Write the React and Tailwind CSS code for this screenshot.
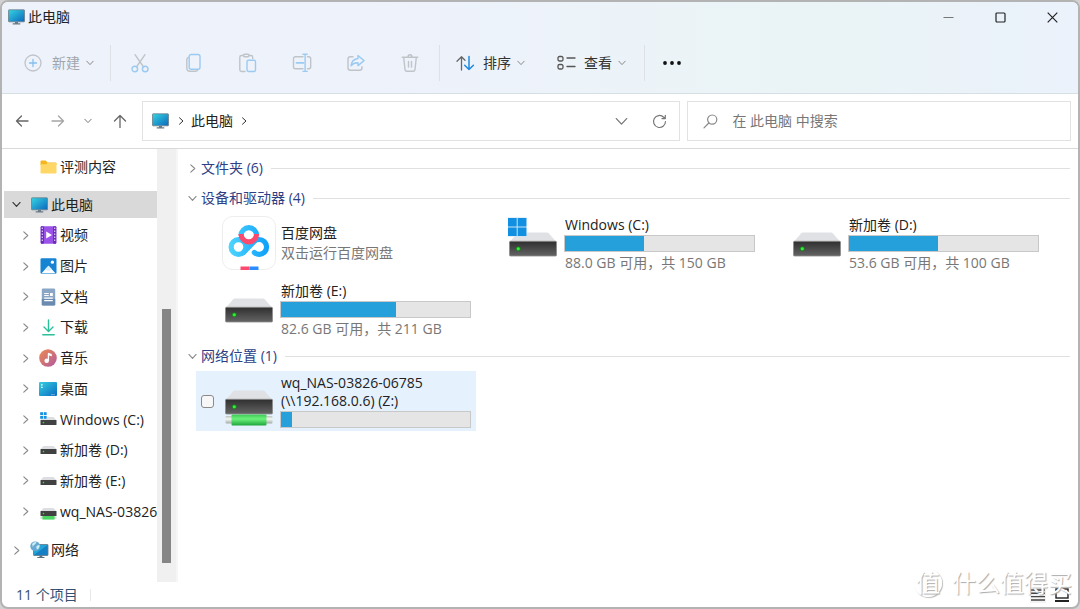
import React, { useId } from "react";

const line = { fill: "none", strokeLinecap: "round", strokeLinejoin: "round" };

function Chevron({ dir = "right", className = "", size = 8, weight = 1 }) {
  const d = dir === "right" ? "M2.5 .8 6 4 2.5 7.2" : "M.8 2.2 4 5.6 7.2 2.2";
  return (
    <svg className={`shrink-0 ${className}`} width={size} height={size} viewBox="0 0 8 8" stroke="currentColor" strokeWidth={weight} aria-hidden="true" {...line}>
      <path d={d} />
    </svg>
  );
}

function MonitorIcon({ className = "" }) {
  const id = useId();
  return (
    <svg className={`shrink-0 ${className}`} width="17" height="16" viewBox="0 0 17 16" aria-hidden="true">
      <defs>
        <linearGradient id={id} x1="0" y1="0" x2="1" y2="1">
          <stop offset="0" stopColor="#35d5e2" />
          <stop offset="1" stopColor="#0a67bd" />
        </linearGradient>
      </defs>
      <rect x=".5" y=".8" width="16" height="12" rx=".6" fill={`url(#${id})`} stroke="#6d7f89" strokeWidth=".8" />
      <path d="M7 13h3v1.3h2.3v1.2H4.7v-1.2H7z" fill="#6a7a86" />
    </svg>
  );
}

function FolderIcon() {
  return (
    <svg width="17" height="14" viewBox="0 0 17 14" aria-hidden="true">
      <path d="M.5 1.5q0-1 1-1h4.3l1.7 2H15.500q1 0 1 1V5H.5z" fill="#f5b61f" />
      <path d="M.5 4.200h5.800l1.200-1.200H15.500q1 0 1 1V12.500q0 1-1 1H1.500q-1 0-1-1z" fill="#ffd766" />
    </svg>
  );
}

function VideoIcon() {
  return (
    <svg width="17" height="18" viewBox="0 0 17 18" aria-hidden="true">
      <rect x=".7" y=".3" width="15.600" height="17.400" rx="1" fill="#9a52e8" />
      <rect x=".7" y=".3" width="3.200" height="17.400" rx="1" fill="#6a2bb5" />
      <rect x="13.100" y=".3" width="3.200" height="17.400" rx="1" fill="#6a2bb5" />
      <path d="M2.300 1.500v15M14.700 1.500v15" stroke="#d9c0f7" strokeWidth="1.300" strokeDasharray="1.400 1.600" />
      <path d="M6.200 5.600v6.800L12 9z" fill="#fff" />
    </svg>
  );
}

function PictureIcon() {
  return (
    <svg width="17" height="16" viewBox="0 0 17 16" aria-hidden="true">
      <rect x=".5" y=".3" width="16" height="15.400" rx="1.300" fill="#1684d2" />
      <path d="M1.500 15.200 8.500 7.800l7 7.400z" fill="#fff" />
      <path d="m5 11.600 3.500-3.800 3.500 3.800-3.500 1.500z" fill="#d9eefb" />
      <circle cx="12.400" cy="4.200" r="1.600" fill="#fff" />
    </svg>
  );
}

function DocumentIcon() {
  return (
    <svg width="15" height="18" viewBox="0 0 15 18" aria-hidden="true">
      <rect x=".8" y=".5" width="13.400" height="17" rx="1.300" fill="#8ba6c4" />
      <path d="M.8 11h13.400v5.200q0 1.300-1.300 1.300H2.100Q.8 17.500.8 16.200z" fill="#6a8ab0" />
      <path d="M3.200 5.500h4.600M3.200 7.500h4.600M3.200 10.200h8.600M3.200 12.700h8.600" stroke="#fff" strokeWidth="1.200" />
      <rect x="9" y="5" width="2.800" height="3" fill="#fff" />
    </svg>
  );
}

function DownloadIcon() {
  return (
    <svg width="15" height="17" viewBox="0 0 15 17" stroke="#2bbf9a" strokeWidth="1.400" aria-hidden="true" {...line}>
      <path d="M7.500 1v11.200M3 8l4.500 4.400L12 8M1.800 15.800h11.400" />
    </svg>
  );
}

function MusicIcon() {
  const id = useId();
  return (
    <svg width="18" height="18" viewBox="0 0 18 18" aria-hidden="true">
      <defs>
        <linearGradient id={id} x1="0" y1="0" x2="1" y2="1">
          <stop offset="0" stopColor="#ef8a4c" />
          <stop offset="1" stopColor="#b05aa3" />
        </linearGradient>
      </defs>
      <circle cx="9" cy="9" r="8.800" fill={`url(#${id})`} />
      <path d="M9 11.500V3.800l3.800 1.300v2.200L10 6.400" fill="#fff" />
      <path d="M9.400 11.800V4.500" stroke="#fff" strokeWidth="1.300" />
      <circle cx="7.700" cy="11.800" r="2.300" fill="#fff" />
    </svg>
  );
}

function DesktopIcon() {
  const id = useId();
  return (
    <svg width="18" height="14" viewBox="0 0 18 14" aria-hidden="true">
      <defs>
        <linearGradient id={id} x1="0" y1="0" x2="1" y2="1">
          <stop offset="0" stopColor="#34cfe0" />
          <stop offset="1" stopColor="#0b6cc2" />
        </linearGradient>
      </defs>
      <rect width="18" height="14" rx="1" fill={`url(#${id})`} />
      <path d="M2 2.200h1.600v1.300H2zM2 4.700h1.600V6H2z" fill="#fff" />
      <path d="M12.500 12.700h3" stroke="#fff" strokeWidth=".8" strokeDasharray="1 1" />
    </svg>
  );
}

function DriveIcon({ kind }) {
  return (
    <svg width="17" height="16" viewBox="0 0 17 16" aria-hidden="true">
      <g transform={kind === "windows" ? "translate(0 1)" : undefined}>
        <path d="M3.500 4h10l2.800 3H.7z" fill="#dcdee1" />
        <rect x=".5" y="7" width="16" height="5" rx=".5" fill="#414141" />
        <circle cx="3.500" cy="9.600" r=".8" fill="#2fe32f" />
      </g>
      {kind === "windows" && (
        <g>
          <rect width="7" height="7.200" fill="#e9f3fb" />
          <path d="M.2.200h2.800v2.900H.2zM3.800.200h2.800v2.900H3.800zM.2 3.900h2.800v2.900H.2zM3.800 3.900h2.800v2.900H3.800z" fill="#168fe0" />
        </g>
      )}
      {kind === "net" && (
        <g>
          <rect x=".5" y="12.600" width="16" height="2.200" fill="#d3dcd4" />
          <rect x="2.500" y="12" width="12" height="3.600" fill="#49d860" />
        </g>
      )}
    </svg>
  );
}

function NetworkIcon() {
  return (
    <svg width="19" height="18" viewBox="0 0 19 18" aria-hidden="true">
      <rect x="3.500" y="3.500" width="14.500" height="11" rx=".6" fill="#22a4d6" stroke="#5d7685" strokeWidth=".8" />
      <path d="M4 14 17.600 4v10z" fill="#1780c4" />
      <path d="M9.500 14.600h2.800v1.300h2.200v1.200H7.300v-1.200h2.200z" fill="#5c7180" />
      <circle cx="5.200" cy="5.300" r="4.900" fill="#67a9d3" />
      <path d="M2 3q2-2.400 4.500-1.800L5.200 3.300 3.600 4.200 3 6.200zM6.500 5l3-1.200q.6 2.700-1.600 4.800L6.400 7.500z" fill="#d4ecf4" />
    </svg>
  );
}

function BigDrive({ kind }) {
  const id = useId();
  return (
    <svg className="shrink-0" width="50" height="54" viewBox="0 0 50 54" aria-hidden="true">
      <defs>
        <linearGradient id={id} x1="0" y1="0" x2="0" y2="1">
          <stop offset="0" stopColor="#2f2f2f" />
          <stop offset="1" stopColor="#646464" />
        </linearGradient>
        <linearGradient id={`${id}g`} x1="0" y1="0" x2="0" y2="1">
          <stop offset="0" stopColor="#3fca55" />
          <stop offset=".4" stopColor="#6cf27c" />
          <stop offset="1" stopColor="#1fa53b" />
        </linearGradient>
        <linearGradient id={`${id}s`} x1="0" y1="0" x2="0" y2="1">
          <stop offset="0" stopColor="#b9c2ba" />
          <stop offset=".4" stopColor="#f5f7f5" />
          <stop offset="1" stopColor="#a4aca5" />
        </linearGradient>
      </defs>
      <path d="M11 16.500h28q1 0 1.700.7L48 25.500H2l7.300-8.300q.7-.7 1.700-.7z" fill="#e0e1e4" />
      <rect x="1.500" y="25.300" width="47" height="14.700" rx="1" fill={`url(#${id})`} stroke="#8b8b8b" strokeWidth=".8" />
      <circle cx="10.300" cy="32.800" r="2.400" fill="#148e1a" />
      <circle cx="10.300" cy="32.800" r="1.500" fill="#39ee3c" />
      {kind === "windows" && (
        <g>
          <rect x="-.3" y="1.500" width="19" height="19" fill="#c9e4f7" />
          <path d="M0 2h8.700v8.500H0zM9.700 2h8.700v8.500H9.700zM0 11.500h8.700V20H0zM9.700 11.500h8.700V20H9.700z" fill="#1190e2" />
        </g>
      )}
      {kind === "net" && (
        <g>
          <rect x="1.500" y="42" width="47" height="7.500" rx="1" fill={`url(#${id}s)`} />
          <rect x="7.500" y="40.500" width="35" height="11" rx="1" fill={`url(#${id}g)`} />
        </g>
      )}
    </svg>
  );
}

function CloudDiskIcon() {
  const id = useId();
  return (
    <svg className="shrink-0" width="54" height="54" viewBox="0 0 54 54" aria-hidden="true">
      <defs>
        <linearGradient id={id} gradientUnits="userSpaceOnUse" x1="6" y1="0" x2="47" y2="0">
          <stop offset="0" stopColor="#4fd6fe" />
          <stop offset="1" stopColor="#0d9ffa" />
        </linearGradient>
      </defs>
      <rect x=".5" y=".5" width="53" height="53" rx="10" fill="#fff" stroke="#ededed" />
      <g fill="none" strokeWidth="5.200" stroke={`url(#${id})`}>
        <circle cx="16.500" cy="31" r="7.400" />
        <path d="M21.500 36.500 32 25.600a7.400 7.400 0 1 1 .3 10.900" strokeLinecap="round" />
        <path d="M19 19.500a7.800 7.800 0 1 1 15.600 0" />
        <path d="M19 18a7.800 7.800 0 0 0 15.600 0" stroke="#fb4a6e" />
      </g>
      <path d="M18.500 50.500H27.500V54H18.500z" fill="#fb4a6e" />
      <path d="M27.500 50.500H36.500V54H27.500z" fill="#2a8cff" />
    </svg>
  );
}

const GRAY = "#bfc4c9";
const BLUE = "#9bcbf1";

const tools = [
  { label: "剪切", art: (<><path d="M5 1.700 13.600 14M15 1.700 6.400 14" stroke={GRAY} /><circle cx="4.800" cy="16" r="2.800" stroke={BLUE} /><circle cx="15.200" cy="16" r="2.800" stroke={BLUE} /></>) },
  { label: "复制", art: (<><path d="M4.200 4.300Q2.800 5 2.800 6.500V15q0 3.200 3.200 3.200h5.500q1.600 0 2.300-1.300" stroke={GRAY} /><rect x="5.200" y="1.500" width="10.800" height="14.800" rx="2" stroke={BLUE} /></>) },
  { label: "粘贴", art: (<><path d="M7 18.500H3.500q-1.700 0-1.700-1.700V4.200q0-1.700 1.700-1.700H5.500M11 2.500h2q1.700 0 1.700 1.700v1.300" stroke={GRAY} /><rect x="5.500" y="1.200" width="5.500" height="2.600" rx="1.200" stroke={GRAY} /><rect x="9" y="7.300" width="8.500" height="11.200" rx="1.400" stroke={BLUE} /></>) },
  { label: "重命名", art: (<><path d="M11 3.800H3.500Q1.500 3.800 1.500 5.800v8q0 2 2 2H11M15.500 3.800h1.200q2 0 2 2v8q0 2-2 2h-1.200" stroke={GRAY} /><path d="M4.500 9.800h7" stroke={BLUE} strokeWidth="1.800" /><path d="M11 1.200h4.200M13.100 1.200v17.200M11 18.400h4.200" stroke={BLUE} /></>) },
  { label: "共享", art: (<><path d="M7 3.800H4.500q-2.500 0-2.500 2.500v8.500q0 2.500 2.500 2.500h9q2.500 0 2.500-2.500v-1" stroke={GRAY} /><path d="M12 2.500 18 7.600l-6 5V9.700q-4.500-.2-7 3 .8-6.500 7-7.200z" stroke={BLUE} /></>) },
  { label: "删除", art: (<><path d="M2.200 4.200h15.600M8 4q0-2.200 2-2.200T12 4M3.700 4.300 5 16.600q.2 1.700 1.900 1.700h6.200q1.700 0 1.900-1.700l1.300-12.300M8.500 8.500v5.500M11.500 8.500v5.500" stroke={GRAY} /></>) },
];

function Divider() {
  return <span className="h-9 w-px shrink-0 bg-[#dde1e5]" />;
}

function Toolbar() {
  return (
    <div className="flex h-[61px] items-center pl-[22px]">
      <button className="flex items-center text-[#a1a6ab]">
        <svg className="mr-2.5" width="18" height="18" viewBox="0 0 18 18" strokeWidth="1.300" aria-hidden="true" {...line}>
          <circle cx="9" cy="9" r="8" stroke={GRAY} />
          <path d="M9 5.500v7M5.500 9h7" stroke="#84bff0" />
        </svg>
        新建
        <Chevron dir="down" className="ml-1.5 text-[#888]" />
      </button>
      <div className="ml-4 flex"><Divider /></div>
      <div className="mx-0.5 flex">
        {tools.map((tool) => (
          <button key={tool.label} aria-label={tool.label} className="flex h-9 w-[54px] items-center justify-center">
            <svg width="20" height="20" viewBox="0 0 20 20" strokeWidth="1.400" aria-hidden="true" {...line}>{tool.art}</svg>
          </button>
        ))}
      </div>
      <Divider />
      <button className="ml-4 flex items-center text-[#333]">
        <svg className="mr-2" width="19" height="18" viewBox="0 0 19 18" strokeWidth="1.300" aria-hidden="true" {...line}>
          <path d="M5.500 16V3M1 7.300 5.500 2.800 9 6.300" stroke="#666" />
          <path d="M13 2.500V15.500M8.700 11.200 13 15.500l4.400-4.300" stroke="#1f88e0" strokeWidth="1.500" />
        </svg>
        排序
        <Chevron dir="down" className="ml-1.5 text-[#888]" />
      </button>
      <button className="ml-8 flex items-center text-[#333]">
        <svg className="mr-2" width="19" height="16" viewBox="0 0 19 16" stroke="#555" strokeWidth="1.300" aria-hidden="true" {...line}>
          <rect x="1" y="1.500" width="5" height="4.500" rx="1.500" />
          <rect x="1" y="9.500" width="5" height="4.500" rx="1.500" />
          <path d="M10 3h8M10 11.500h8" />
        </svg>
        查看
        <Chevron dir="down" className="ml-1.5 text-[#888]" />
      </button>
      <div className="ml-[18px] flex"><Divider /></div>
      <button aria-label="更多" className="ml-[18px]">
        <svg width="18" height="6" viewBox="0 0 18 6" fill="#111" aria-hidden="true">
          <circle cx="2" cy="3" r="1.900" /><circle cx="9" cy="3" r="1.900" /><circle cx="16" cy="3" r="1.900" />
        </svg>
      </button>
    </div>
  );
}

function NavIcon({ d, className, label }) {
  return (
    <button aria-label={label} className={className}>
      <svg width="14" height="14" viewBox="0 0 14 14" stroke="currentColor" strokeWidth="1.300" aria-hidden="true" {...line}>
        <path d={d} />
      </svg>
    </button>
  );
}

function AddressRow() {
  return (
    <div className="flex h-[55px] items-center border-b border-[#d9d9d9] bg-white pr-[7px] pl-[13px]">
      <NavIcon label="后退" d="M13 7H1.500M6.500 2 1.500 7l5 5" className="text-[#666]" />
      <NavIcon label="前进" d="M1 7h11.500M7.500 2l5 5-5 5" className="ml-[22px] text-[#a5a5a5]" />
      <button aria-label="最近位置" className="ml-[19px] text-[#777]"><Chevron dir="down" /></button>
      <NavIcon label="上移" d="M7 13.500V1.500M1.500 7 7 1.500 12.500 7" className="ml-[21px] text-[#666]" />
      <div className="ml-[15px] flex h-10 flex-[516] items-center border border-[#e2e2e2] pr-3 pl-[9px]">
        <MonitorIcon className="mr-1" />
        <Chevron className="mx-1 text-[#333]" />
        <button className="ml-0.5 mr-1 text-[#222]">此电脑</button>
        <Chevron className="mx-[3px] text-[#333]" />
        <button aria-label="历史记录" className="ml-auto text-[#777]"><Chevron dir="down" size={13} weight={0.8} /></button>
        <button aria-label="刷新" className="ml-6 text-[#777]">
          <svg width="15" height="15" viewBox="0 0 15 15" stroke="currentColor" strokeWidth="1.200" aria-hidden="true" {...line}>
            <path d="M13.500 7.500A6 6 0 1 1 11.700 3.200L13 4.500M13.300 1.300v3.300H10" />
          </svg>
        </button>
      </div>
      <label className="ml-[7px] flex h-10 flex-[352] items-center border border-[#e2e2e2] px-[15px]">
        <svg className="shrink-0" width="15" height="15" viewBox="0 0 15 15" stroke="#888" strokeWidth="1.200" aria-hidden="true" {...line}>
          <circle cx="9.200" cy="5.600" r="4.600" /><path d="M5.800 9 1 13.800" />
        </svg>
        <input type="search" aria-label="搜索" placeholder="在 此电脑 中搜索" className="ml-3.5 w-full min-w-0 bg-transparent outline-none placeholder:text-[#777]" />
      </label>
    </div>
  );
}

const places = [
  { name: "视频", icon: <VideoIcon /> },
  { name: "图片", icon: <PictureIcon /> },
  { name: "文档", icon: <DocumentIcon /> },
  { name: "下载", icon: <DownloadIcon /> },
  { name: "音乐", icon: <MusicIcon /> },
  { name: "桌面", icon: <DesktopIcon /> },
  { name: "Windows (C:)", icon: <DriveIcon kind="windows" /> },
  { name: "新加卷 (D:)", icon: <DriveIcon /> },
  { name: "新加卷 (E:)", icon: <DriveIcon /> },
  { name: "wq_NAS-03826", icon: <DriveIcon kind="net" /> },
];

function Sidebar() {
  return (
    <nav className="flex w-[155px] shrink-0 flex-col overflow-hidden pt-1 pb-[18px] pl-0.5">
      <button className="flex h-[27px] shrink-0 items-center gap-[3px] pl-9"><FolderIcon />评测内容</button>
      <button className="mt-[11px] flex h-[27px] shrink-0 items-center bg-[#d9d9d9] pl-2">
        <Chevron dir="down" size={9} className="mr-2.5 text-[#333]" />
        <MonitorIcon className="mr-[3px]" />
        此电脑
      </button>
      <ul className="mt-0.5 grid flex-1 auto-rows-fr">
        {places.map((place) => (
          <li key={place.name} className="flex">
            <button className="flex items-center whitespace-nowrap pl-[17px]">
              <Chevron size={9} className="mr-[9px] text-[#888]" />
              <span className="mr-[3px] flex w-[18px] justify-center">{place.icon}</span>
              {place.name}
            </button>
          </li>
        ))}
      </ul>
      <button className="mt-[9px] flex h-7 shrink-0 items-center pl-2">
        <Chevron size={9} className="mr-[9px] text-[#888]" />
        <NetworkIcon />
        <span className="ml-0.5">网络</span>
      </button>
    </nav>
  );
}

function GroupHeader({ open, children }) {
  return (
    <h2 className="flex h-[30px] items-center">
      <button className="flex items-center text-[#2c3f87]">
        <Chevron dir={open ? "down" : "right"} size={9} className="mr-1 text-[#8a8a8a]" />
        {children}
      </button>
      <span className="ml-2 h-px flex-1 bg-[#e0e0e0]" />
    </h2>
  );
}

function UsageBar({ percent, label }) {
  return (
    <span role="progressbar" aria-label={label} aria-valuenow={percent} className="my-px block h-[17px] w-[191px] border border-[#c8c8c8] bg-[#e5e5e5]">
      <span className="block h-full bg-[#26a0da]" style={{ width: `${percent}%` }} />
    </span>
  );
}

function Drive({ name, info, percent, kind }) {
  return (
    <button className="flex h-[60px] w-[280px] items-center pl-7 text-left">
      <BigDrive kind={kind} />
      <span className="ml-1.5 flex flex-col leading-[19px]">
        <span className="pl-px">{name}</span>
        <UsageBar percent={percent} label={name} />
        <span className="pl-px whitespace-nowrap text-[#777]">{info}</span>
      </span>
    </button>
  );
}

function Content() {
  return (
    <main className="min-w-0 flex-1 border-l-2 border-[#f6f6f6] pt-1 pr-2 pl-2.5">
      <GroupHeader>文件夹 (6)</GroupHeader>
      <GroupHeader open>设备和驱动器 (4)</GroupHeader>
      <div className="flex flex-wrap gap-x-1 gap-y-1.5 pl-2">
        <button className="flex h-[60px] w-[280px] items-center pl-[26px] text-left">
          <CloudDiskIcon />
          <span className="ml-[5px] flex flex-col leading-5">
            <span>百度网盘</span>
            <span className="text-[#777]">双击运行百度网盘</span>
          </span>
        </button>
        <Drive name="Windows (C:)" info="88.0 GB 可用，共 150 GB" percent={42} kind="windows" />
        <Drive name="新加卷 (D:)" info="53.6 GB 可用，共 100 GB" percent={47} />
        <Drive name="新加卷 (E:)" info="82.6 GB 可用，共 211 GB" percent={61} />
      </div>
      <div className="mt-0.5"><GroupHeader open>网络位置 (1)</GroupHeader></div>
      <label className="ml-2 flex h-[60px] w-[280px] items-center bg-[#e5f2fe] pl-[5px]">
        <input type="checkbox" className="mr-2.5 size-[13px] shrink-0 appearance-none rounded-[3px] border border-[#8a8a8a] bg-[#f7f7f7]" />
        <BigDrive kind="net" />
        <span className="ml-1.5 flex flex-col leading-[18px]">
          <span className="pl-px">wq_NAS-03826-06785</span>
          <span className="pl-px">(\\192.168.0.6) (Z:)</span>
          <UsageBar percent={6} label="Z:" />
        </span>
      </label>
    </main>
  );
}

export default function App() {
  return (
    <div className="flex min-h-screen bg-[#d2d2d2] font-['Open_Sans','Noto_Sans_CJK_SC',sans-serif] text-sm text-[#222]">
      <div className="relative flex flex-1 flex-col overflow-hidden rounded-lg border-2 border-[#b3b3b3] bg-white">
        <header className="border-b border-[#d5dfe4] bg-linear-to-r from-[#eef2fb] from-35% via-[#eaf4f6] via-75% to-[#ebf2fb]">
          <div className="flex h-[30px] items-center pl-1.5">
            <MonitorIcon className="mr-[3px]" />
            <h1 className="text-[#222]">此电脑</h1>
            <div className="ml-auto flex">
              <button aria-label="最小化" className="flex h-[30px] w-[52px] items-center justify-center">
                <svg width="11" height="11" viewBox="0 0 11 11" stroke="#777" aria-hidden="true"><path d="M.5 5.500h10" /></svg>
              </button>
              <button aria-label="最大化" className="flex h-[30px] w-[52px] items-center justify-center">
                <svg width="11" height="11" viewBox="0 0 11 11" fill="none" stroke="#222" strokeWidth="1.200" aria-hidden="true"><rect x="1" y="1" width="9" height="9" rx="1" /></svg>
              </button>
              <button aria-label="关闭" className="flex h-[30px] w-[52px] items-center justify-center">
                <svg width="11" height="11" viewBox="0 0 11 11" stroke="#222" strokeWidth="1.200" aria-hidden="true"><path d="M.7.700l9.600 9.600M10.300.700.7 10.300" /></svg>
              </button>
            </div>
          </div>
          <Toolbar />
        </header>
        <AddressRow />
        <div className="flex flex-1">
          <Sidebar />
          <div className="flex w-[19px] shrink-0 flex-col bg-[#f0f0f0] px-[5px] pt-40 pb-[19px]">
            <div className="flex-1 bg-[#858585]" />
          </div>
          <Content />
        </div>
        <footer className="flex h-[25px] items-center pr-2 pl-3.5 text-[#34506e]">
          <span>11 个项目</span>
          <span className="ml-3 h-3 w-px bg-[#e8e8e8]" />
          <div className="ml-auto flex gap-2">
            <button aria-label="详细信息" className="flex size-4 items-center justify-center bg-[#f3f3f3]">
              <svg width="14" height="12" viewBox="0 0 14 12" stroke="#444" strokeWidth="1.400" aria-hidden="true"><path d="M0 1h14M0 4.300h14M0 7.600h14M0 11h14" /></svg>
            </button>
            <button aria-label="大图标" className="flex size-4 items-center justify-center">
              <svg width="14" height="14" viewBox="0 0 14 14" fill="none" stroke="#222" strokeWidth="1.400" aria-hidden="true"><rect x="1" y="1" width="12" height="9" /><path d="M0 13h14" strokeWidth="2" /></svg>
            </button>
          </div>
        </footer>
        <div className="pointer-events-none absolute right-1.5 bottom-2 flex items-center gap-2.5 text-2xl leading-8 text-white text-shadow-[1px_1px_1px_#aaa]">
          <span className="flex size-7 items-center justify-center rounded-full border border-white shadow-[1px_1px_1px_#bbb]">值</span>
          <span>什么值得买</span>
        </div>
      </div>
    </div>
  );
}
